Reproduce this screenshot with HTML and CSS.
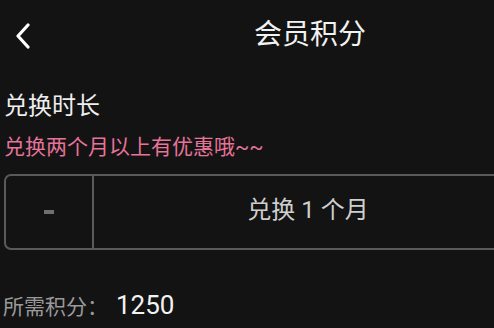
FILE: index.html
```html
<!DOCTYPE html>
<html lang="zh">
<head>
<meta charset="utf-8">
<link rel="stylesheet" href="styles.css">
</head>
<body>
<div class="page">
  <header class="nav">
    <span class="back">
      <svg width="16" height="26" viewBox="0 0 16 26"><path d="M13 2 L3 13 L13 24" fill="none" stroke="#fff" stroke-width="3.2" stroke-linecap="round" stroke-linejoin="round"/></svg>
    </span>
    <h1 class="title">会员积分</h1>
  </header>
  <section class="duration">
    <h2 class="label">兑换时长</h2>
    <p class="hint">兑换两个月以上有优惠哦~~</p>
    <div class="stepper">
      <div class="step minus"><span class="dash"></span></div>
      <div class="value"><span>兑换 1 个月</span></div>
    </div>
  </section>
  <div class="cost">
    <span class="cost-label">所需积分：</span>
    <span class="cost-num">1250</span>
  </div>
</div>
</body>
</html>
```
FILE: styles.css
```css
html, body {
  margin: 0;
  padding: 0;
  background: #131313;
  overflow: hidden;
}
body {
  font-family: Roboto, "Noto Sans CJK SC", sans-serif;
  color: #eee;
}
.page {
  width: 620px;
}
.nav {
  position: relative;
  height: 70px;
  display: flex;
  align-items: center;
  justify-content: center;
}
.back {
  position: absolute;
  left: 15px;
  top: 23px;
  display: flex;
}
.title {
  margin: 0;
  font-size: 28px;
  font-weight: 400;
  line-height: 30px;
  color: #f2f2f2;
}
.duration {
  padding: 21px 4px 0 4px;
}
.label {
  margin: 0;
  font-size: 24px;
  font-weight: 400;
  line-height: 30px;
  color: #eee;
}
.hint {
  margin: 14px 0 0 0;
  font-size: 21px;
  line-height: 25px;
  color: #e67399;
}
.stepper {
  margin-top: 14px;
  width: 516px;
  height: 72px;
  border: 2px solid #5a5a5a;
  border-radius: 7px;
  display: flex;
}
.step {
  width: 86px;
  display: flex;
  align-items: center;
  justify-content: center;
}
.minus {
  border-right: 2px solid #5a5a5a;
}
.dash {
  width: 10px;
  height: 4px;
  background: #6f6f6f;
}
.value {
  flex: 1;
  display: flex;
  align-items: center;
  justify-content: center;
  padding-bottom: 9px;
  font-size: 24px;
  color: #cfcfcf;
}
.cost {
  margin-top: 40px;
  padding-left: 3px;
  display: flex;
  align-items: baseline;
}
.cost-label {
  font-size: 21px;
  color: #9a9a9a;
}
.cost-num {
  margin-left: 8px;
  font-size: 26px;
  color: #f2f2f2;
}
```
